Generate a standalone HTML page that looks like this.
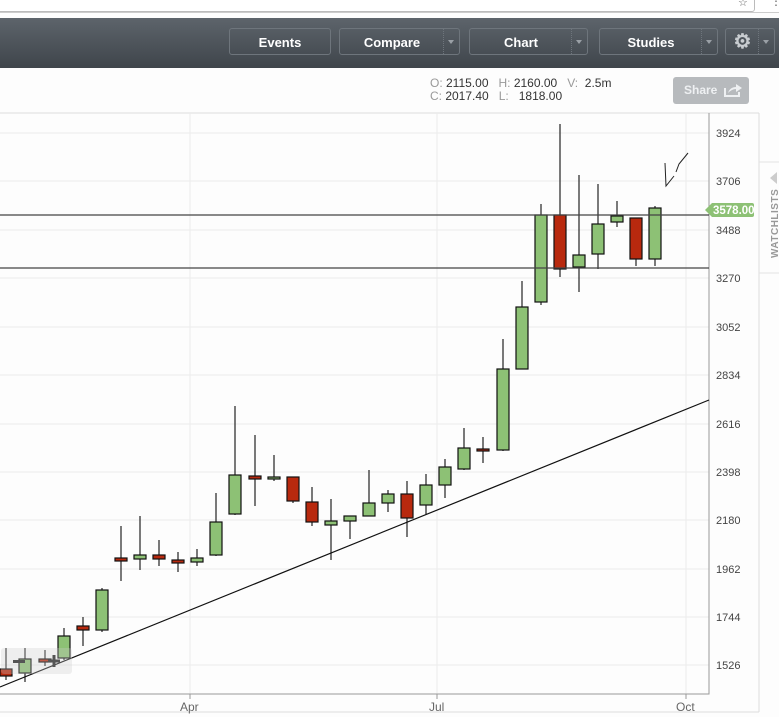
<!DOCTYPE html>
<html><head><style>
body{margin:0;width:779px;height:717px;overflow:hidden;background:#fdfdfd;font-family:"Liberation Sans",sans-serif;position:relative}
.bar{position:absolute;left:0;top:0;width:779px;height:12px;background:#fff;border-bottom:1px solid #ccc}
.bar .in{position:absolute;left:-5px;top:-10px;width:758px;height:20px;border:1px solid #bbb;border-radius:3px;background:#fff}
.tb{position:absolute;left:0;top:18px;width:779px;height:50px;background:linear-gradient(#5d646b,#3f454b)}
.btn{position:absolute;top:10px;height:27px;border:1px solid #6e757c;border-radius:3px;color:#fff;font-weight:bold;font-size:13px;line-height:27px;text-align:center;box-sizing:border-box}
.dd{position:absolute;top:0;right:0;width:15px;height:25px;border-left:1px dotted #6e757c}
.dd:after{content:"";position:absolute;left:4px;top:11px;border:3.5px solid transparent;border-top:4px solid #9aa0a6}
.ohlc{position:absolute;font-size:12px;color:#333;line-height:13px}
.ohlc span{color:#999}
</style></head><body>
<div class="bar"><div class="in"></div><span style="position:absolute;left:738px;top:-4px;font-size:11px;color:#666">☆</span><span style="position:absolute;left:770px;top:-6px;font-size:12px;color:#666">⋮</span></div>
<div class="tb">
<div class="btn" style="left:229px;width:102px">Events</div>
<div class="btn" style="left:339px;width:121px;padding-right:15px">Compare<div class="dd"></div></div>
<div class="btn" style="left:469px;width:119px;padding-right:15px">Chart<div class="dd"></div></div>
<div class="btn" style="left:599px;width:119px;padding-right:15px">Studies<div class="dd"></div></div>
<div class="btn" style="left:725px;width:50px;padding-right:15px;font-size:20px;color:#c8ccd0">⚙<div class="dd"></div></div>
</div>
<div class="ohlc" style="left:430px;top:77px"><span>O:</span>&nbsp;2115.00&nbsp;&nbsp;&nbsp;<span>H:</span>&nbsp;2160.00&nbsp;&nbsp;&nbsp;<span>V:</span>&nbsp;&nbsp;2.5m<br><span>C:</span>&nbsp;2017.40&nbsp;&nbsp;&nbsp;<span>L:</span>&nbsp;&nbsp;&nbsp;1818.00</div>
<div style="position:absolute;left:673px;top:77px;width:76px;height:27px;background:#b7babd;border-radius:3px;color:#eef0f2;font-size:12px;font-weight:bold;line-height:27px;padding-left:11px;box-sizing:border-box">Share
<svg width="20" height="16" style="position:absolute;left:50px;top:5px"><path d="M2 6 V14 H16 V10" fill="none" stroke="#eef0f2" stroke-width="2"/><path d="M5 11 Q7 5 13 5 V2 L19 6 L13 10 V7 Q9 7 5 11 Z" fill="#eef0f2"/></svg></div>
<svg width="779" height="717" style="position:absolute;left:0;top:0" font-family="Liberation Sans" font-size="11">
<line x1="0" y1="113" x2="759" y2="113" stroke="#ddd"/>
<line x1="759" y1="113" x2="759" y2="712" stroke="#ddd"/>
<line x1="0" y1="712" x2="759" y2="712" stroke="#ddd"/>
<line x1="759" y1="162" x2="779" y2="162" stroke="#e4e4e4"/>
<line x1="759" y1="273" x2="779" y2="273" stroke="#e4e4e4"/>
<g stroke="#ececec">
<line x1="0" x2="709" y1="133" y2="133"/><line x1="0" x2="709" y1="181" y2="181"/><line x1="0" x2="709" y1="230" y2="230"/><line x1="0" x2="709" y1="278" y2="278"/><line x1="0" x2="709" y1="327" y2="327"/><line x1="0" x2="709" y1="375" y2="375"/><line x1="0" x2="709" y1="424" y2="424"/><line x1="0" x2="709" y1="472" y2="472"/><line x1="0" x2="709" y1="520" y2="520"/><line x1="0" x2="709" y1="569" y2="569"/><line x1="0" x2="709" y1="617" y2="617"/><line x1="0" x2="709" y1="665" y2="665"/>
<line x1="190" x2="190" y1="113" y2="694"/><line x1="437" x2="437" y1="113" y2="694"/><line x1="686" x2="686" y1="113" y2="694"/>
</g>
<polyline points="709,113 709,694 0,694" fill="none" stroke="#999"/>
<g stroke="#999"><line x1="190" x2="190" y1="694" y2="699"/><line x1="437" x2="437" y1="694" y2="699"/><line x1="686" x2="686" y1="694" y2="699"/></g>
<g fill="#444" font-size="11">
<text x="716" y="137">3924</text><text x="716" y="185">3706</text><text x="716" y="234">3488</text><text x="716" y="282">3270</text><text x="716" y="331">3052</text><text x="716" y="379">2834</text><text x="716" y="428">2616</text><text x="716" y="476">2398</text><text x="716" y="524">2180</text><text x="716" y="573">1962</text><text x="716" y="621">1744</text><text x="716" y="669">1526</text>
</g>
<g fill="#666" font-size="12"><text x="180" y="711">Apr</text><text x="429" y="711">Jul</text><text x="676" y="711">Oct</text></g>
<g stroke="#222" stroke-width="1.2">
<line x1="6" x2="6" y1="648" y2="680"/><line x1="25" x2="25" y1="648" y2="682"/><line x1="45" x2="45" y1="650" y2="666"/><line x1="64" x2="64" y1="628" y2="660"/><line x1="83" x2="83" y1="617" y2="646"/><line x1="102" x2="102" y1="588" y2="632"/><line x1="121" x2="121" y1="526" y2="581"/><line x1="140" x2="140" y1="516" y2="570"/><line x1="159" x2="159" y1="540" y2="566"/><line x1="178" x2="178" y1="552" y2="572"/><line x1="197" x2="197" y1="549" y2="566"/><line x1="216" x2="216" y1="493" y2="556"/><line x1="235" x2="235" y1="406" y2="515"/><line x1="255" x2="255" y1="435" y2="506"/><line x1="274" x2="274" y1="455" y2="481"/><line x1="293" x2="293" y1="477" y2="503"/><line x1="312" x2="312" y1="487" y2="526"/><line x1="331" x2="331" y1="499" y2="560"/><line x1="350" x2="350" y1="516" y2="539"/><line x1="369" x2="369" y1="470" y2="516"/><line x1="388" x2="388" y1="490" y2="512"/><line x1="407" x2="407" y1="481" y2="537"/><line x1="426" x2="426" y1="474" y2="515"/><line x1="445" x2="445" y1="459" y2="498"/><line x1="464" x2="464" y1="428" y2="470"/><line x1="483" x2="483" y1="437" y2="463"/><line x1="503" x2="503" y1="339" y2="451"/><line x1="522" x2="522" y1="281" y2="369"/><line x1="541" x2="541" y1="204" y2="305"/><line x1="560" x2="560" y1="124" y2="277"/><line x1="579" x2="579" y1="175" y2="292"/><line x1="598" x2="598" y1="184" y2="269"/><line x1="617" x2="617" y1="201" y2="227"/><line x1="636" x2="636" y1="218" y2="266"/><line x1="655" x2="655" y1="206" y2="266"/>
</g>
<g stroke="#111" stroke-width="1.2">
<rect x="0" y="669" width="12" height="7" fill="#b8290e"/>
<rect x="19" y="659" width="12" height="14" fill="#8dc175"/>
<rect x="39" y="659" width="12" height="3" fill="#b8290e"/>
<rect x="58" y="636" width="12" height="22" fill="#8dc175"/>
<rect x="77" y="626" width="12" height="4" fill="#b8290e"/>
<rect x="96" y="590" width="12" height="40" fill="#8dc175"/>
<rect x="115" y="558" width="12" height="3" fill="#b8290e"/>
<rect x="134" y="555" width="12" height="4" fill="#8dc175"/>
<rect x="153" y="555" width="12" height="4" fill="#b8290e"/>
<rect x="172" y="560" width="12" height="3" fill="#b8290e"/>
<rect x="191" y="558" width="12" height="4" fill="#8dc175"/>
<rect x="210" y="522" width="12" height="33" fill="#8dc175"/>
<rect x="229" y="475" width="12" height="39" fill="#8dc175"/>
<rect x="249" y="476" width="12" height="3" fill="#b8290e"/>
<rect x="268" y="477" width="12" height="2" fill="#8dc175"/>
<rect x="287" y="477" width="12" height="24" fill="#b8290e"/>
<rect x="306" y="502" width="12" height="20" fill="#b8290e"/>
<rect x="325" y="521" width="12" height="4" fill="#8dc175"/>
<rect x="344" y="516" width="12" height="5" fill="#8dc175"/>
<rect x="363" y="503" width="12" height="13" fill="#8dc175"/>
<rect x="382" y="494" width="12" height="9" fill="#8dc175"/>
<rect x="401" y="494" width="12" height="24" fill="#b8290e"/>
<rect x="420" y="485" width="12" height="20" fill="#8dc175"/>
<rect x="439" y="467" width="12" height="18" fill="#8dc175"/>
<rect x="458" y="448" width="12" height="21" fill="#8dc175"/>
<rect x="477" y="449" width="12" height="2" fill="#b8290e"/>
<rect x="497" y="369" width="12" height="81" fill="#8dc175"/>
<rect x="516" y="307" width="12" height="62" fill="#8dc175"/>
<rect x="535" y="215" width="12" height="87" fill="#8dc175"/>
<rect x="554" y="215" width="12" height="54" fill="#b8290e"/>
<rect x="573" y="255" width="12" height="12" fill="#8dc175"/>
<rect x="592" y="224" width="12" height="30" fill="#8dc175"/>
<rect x="611" y="216" width="12" height="6" fill="#8dc175"/>
<rect x="630" y="218" width="12" height="41" fill="#b8290e"/>
<rect x="649" y="208" width="12" height="51" fill="#8dc175"/>
</g>
<line x1="0" y1="215" x2="709" y2="215" stroke="#444" stroke-width="1.2"/>
<line x1="0" y1="268" x2="709" y2="268" stroke="#444" stroke-width="1.2"/>
<line x1="0" y1="687" x2="709" y2="400" stroke="#111" stroke-width="1.2"/>
<path d="M665 163 L666 186 L674 176 M676 172 L679 164 L688 153" fill="none" stroke="#222" stroke-width="1"/>
<path d="M705 210 L712 203 L752 203 Q754 203 754 205 L754 215 Q754 217 752 217 L712 217 Z" fill="#8dc175"/>
<text x="713" y="214" fill="#fff" font-weight="bold" font-size="11.5">3578.00</text>
<rect x="1" y="648" width="71" height="26" rx="3" fill="#ccc" fill-opacity="0.3"/>
<rect x="13" y="660" width="12" height="3" fill="#555"/>
<path d="M48 661 h12 M54 655 v12" stroke="#555" stroke-width="3"/>
<path d="M777 172 L770 178 L777 184 Z" fill="#ccc"/>
<text transform="translate(778,258) rotate(-90)" fill="#999" font-size="10" font-weight="bold" letter-spacing="0.5">WATCHLISTS</text>
</svg>
</body></html>
